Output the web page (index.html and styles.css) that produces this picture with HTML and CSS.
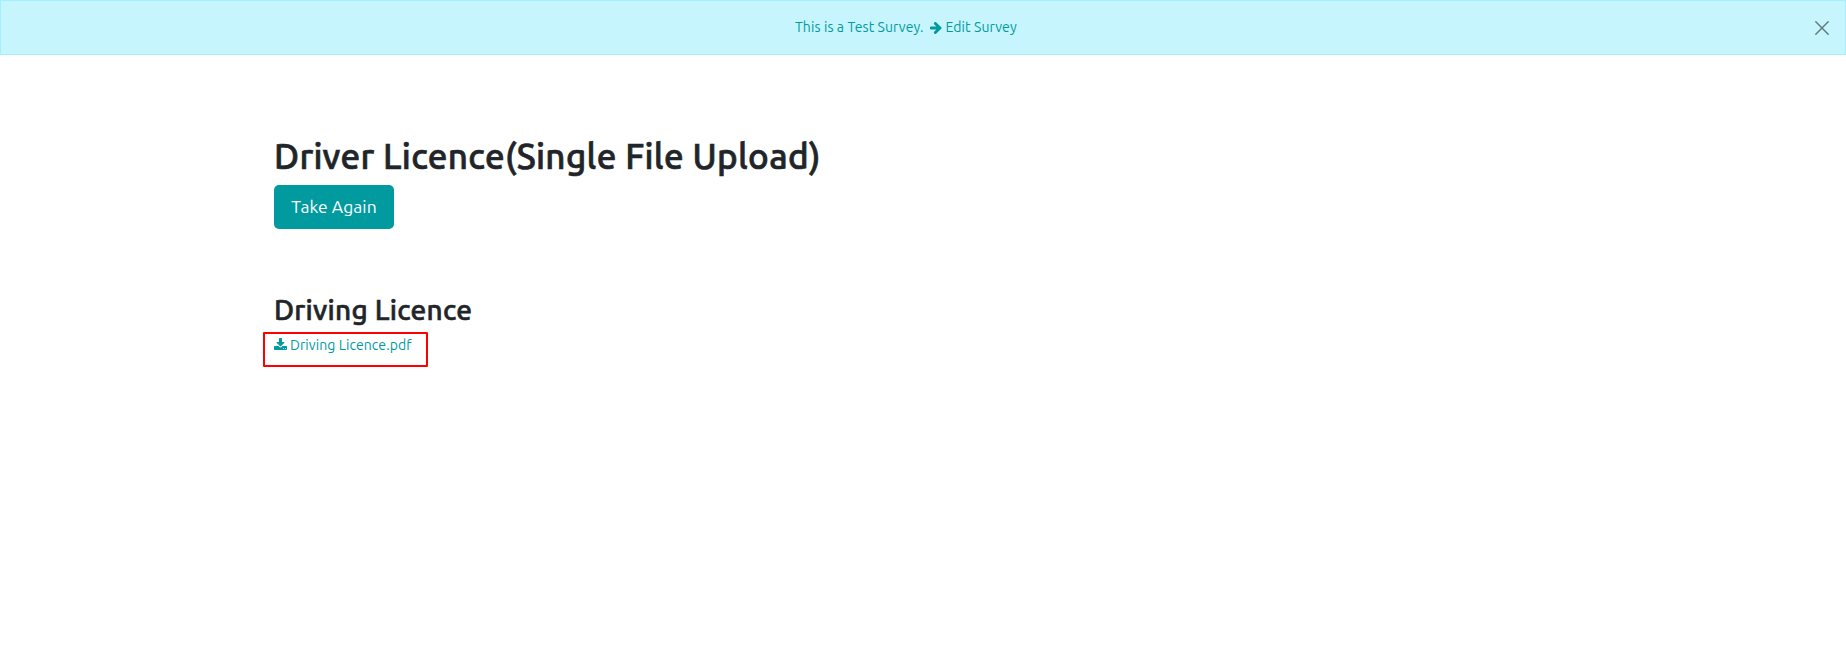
FILE: index.html
```
<!DOCTYPE html>
<html lang="en">
<head>
<meta charset="utf-8">
<title>Driver Licence</title>
<link rel="stylesheet" href="styles.css">
</head>
<body>
<div class="alert">
  <div class="alert-text">
    <span class="alert-label">This is a Test Survey.</span>
    <a class="edit" href="#"><svg class="arrow" viewBox="0 192 1536 1536"><path fill="currentColor" d="M1472 960q0 54-37 91l-651 651q-39 37-91 37-51 0-90-37l-75-75q-38-38-38-91t38-91l293-293H117q-52 0-84.500-37.500T0 1024V896q0-53 32.500-90.500T117 768h704L528 474q-38-36-38-90t38-90l75-75q38-38 90-38 53 0 91 38l651 651q37 35 37 90z"/></svg><span>Edit Survey</span></a>
  </div>
  <button class="close" aria-label="Close"><svg viewBox="0 0 14 14"><path d="M.8.8 13.200 13.200M13.200.8.8 13.200" stroke="currentColor" stroke-width="1.500" stroke-linecap="round"/></svg></button>
</div>
<main class="content">
  <h1 class="title">Driver Licence(Single File Upload)</h1>
  <button class="again"><span>Take Again</span></button>
  <h2 class="question">Driving Licence</h2>
  <div class="answer">
    <a class="file" href="#"><svg class="download" viewBox="0 0 1664 1536"><path fill="currentColor" d="M1280 1344q0-26-19-45t-45-19-45 19-19 45 19 45 45 19 45-19 19-45zm256 0q0-26-19-45t-45-19-45 19-19 45 19 45 45 19 45-19 19-45zm128-224v320q0 40-28 68t-68 28H96q-40 0-68-28t-28-68v-320q0-40 28-68t68-28h465l135 136q58 56 136 56t136-56l136-136h464q40 0 68 28t28 68zm-325-569q17 41-14 70l-448 448q-18 19-45 19t-45-19L339 621q-31-29-14-70 17-39 59-39h256V64q0-26 19-45t45-19h256q26 0 45 19t19 45v448h256q42 0 59 39z"/></svg><span>Driving Licence.pdf</span></a>
  </div>
</main>
</body>
</html>
```
FILE: styles.css
```
* { box-sizing: border-box; }
body {
  margin: 0;
  background: #fff;
  color: #212529;
  font-family: Ubuntu, "Noto Sans", sans-serif;
  font-size: 14px;
  line-height: 21px;
}
a { color: inherit; text-decoration: none; }
svg { display: block; fill: none; flex: none; }
button { border: 0; font-family: inherit; }
.alert {
  display: flex;
  justify-content: space-between;
  height: 55px;
  padding: 16px 16px 0 794px;
  border: 1px solid #a2f0fd;
  background: #c7f5fd;
  color: #009a9f;
}
.alert-text { display: flex; white-space: nowrap; letter-spacing: 0.090px; }
.alert-label { width: 135px; }
.edit { display: flex; }
.arrow { width: 12px; height: 12px; margin: 5px 3.500px 0 0; }
.close {
  width: 14px;
  height: 14px;
  margin-top: 4px;
  padding: 0;
  background: none;
  color: #637a7f;
}
.content { padding: 80px 274px 0; }
.title {
  margin: 0;
  padding-bottom: 8px;
  font-size: 35px;
  font-weight: 500;
  line-height: 42px;
  letter-spacing: 0.330px;
  -webkit-text-stroke: 0.700px currentColor;
}
.again {
  display: flex;
  align-items: center;
  justify-content: center;
  width: 120px;
  height: 44px;
  padding: 0 0 1px;
  border-radius: 5px;
  background: #009a9f;
  color: #fff;
  font-size: 17.500px;
  letter-spacing: 0.050px;
}
.question {
  margin: 64px 0 0;
  font-size: 28px;
  font-weight: 500;
  line-height: 34px;
  letter-spacing: 0.280px;
  -webkit-text-stroke: 0.600px currentColor;
}
.answer {
  width: 165px;
  height: 35px;
  margin: 5px 0 0 -11px;
  padding: 1px 9px;
  border: 2px solid #f00;
  border-radius: 1px;
}
.file { display: flex; color: #009a9f; white-space: nowrap; letter-spacing: 0.080px; }
.download { width: 13px; height: 12px; margin: 3px 3px 0 0; }
```
